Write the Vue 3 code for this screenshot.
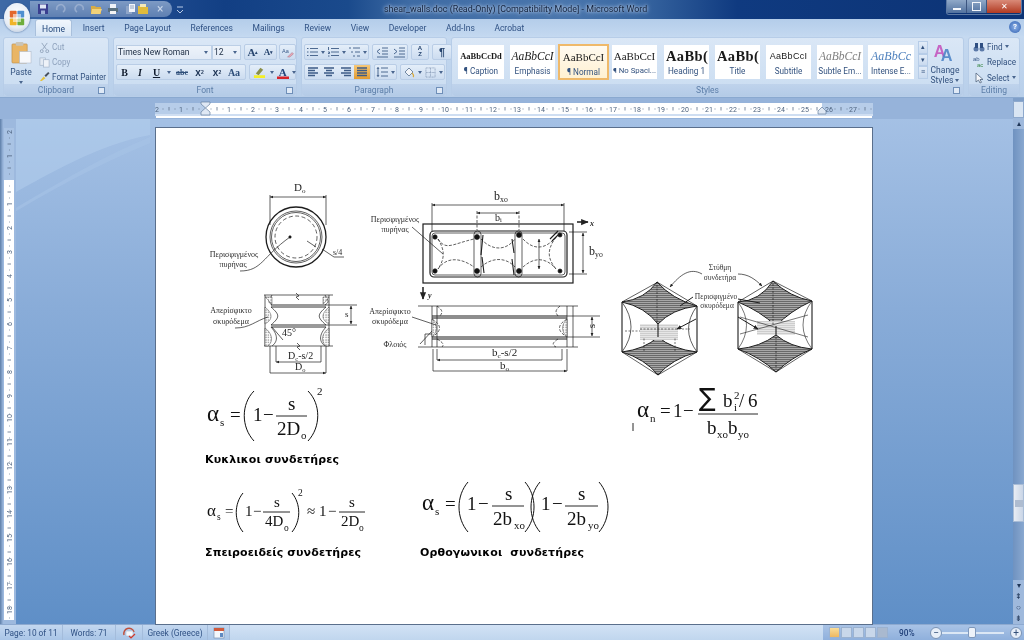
<script setup>
const tabs = ['Insert', 'Page Layout', 'References', 'Mailings', 'Review', 'View', 'Developer', 'Add-Ins', 'Acrobat']
const styles = [
  { k: 'caption', p: 'AaBbCcDd', l: '¶ Caption' },
  { k: 'emph', p: 'AaBbCcI', l: 'Emphasis' },
  { k: 'normal', p: 'AaBbCcI', l: '¶ Normal' },
  { k: 'nospace', p: 'AaBbCcI', l: '¶ No Spaci...' },
  { k: 'h1', p: 'AaBb(', l: 'Heading 1' },
  { k: 'title', p: 'AaBb(', l: 'Title' },
  { k: 'subtitle', p: 'AaBbCcI', l: 'Subtitle' },
  { k: 'subtle', p: 'AaBbCcI', l: 'Subtle Em...' },
  { k: 'intense', p: 'AaBbCc', l: 'Intense E...' }
]
const hMarks = []
for (let i = -2; i <= 27; i++) hMarks.push({ n: Math.abs(i), x: 205 + 24 * i - 155, show: i !== 0 })
const vMarks = []
for (let i = -2; i <= 18; i++) vMarks.push({ n: Math.abs(i), y: 180 + 24 * i - 128, show: i !== 0 })
</script>

<template>
  <div class="app">
    <header class="titlebar">
      <div class="qat">
        <svg class="qi" viewBox="0 0 12 12"><rect x="1" y="1" width="10" height="10" fill="#3a3f8f"/><rect x="3" y="1.5" width="6" height="4" fill="#dfe6f5"/><rect x="4" y="7.5" width="4" height="3.5" fill="#9fb0d8"/></svg>
        <svg class="qi faded" viewBox="0 0 12 12"><path d="M3 7a4 4 0 1 1 6 2" fill="none" stroke="#a6b8d6" stroke-width="1.6"/></svg>
        <span class="qc"></span>
        <svg class="qi faded tight" viewBox="0 0 12 12"><path d="M9 7a4 4 0 1 0-6 2" fill="none" stroke="#a6b8d6" stroke-width="1.6"/></svg>
        <svg class="qi" viewBox="0 0 12 12"><path d="M1 3h4l1 1h5v7H1z" fill="#d6ab45"/><path d="M2 6h10l-2 5H1z" fill="#f2d27a"/></svg>
        <svg class="qi" viewBox="0 0 12 12"><rect x="3" y="1" width="6" height="4" fill="#eef2f8"/><rect x="1" y="5" width="10" height="4" fill="#59707f"/><rect x="3" y="8" width="6" height="3" fill="#f4f4f4"/></svg>
        <svg class="qi near" viewBox="0 0 12 12"><rect x="2" y="3" width="6" height="8" fill="#8ea5c8"/><rect x="5" y="1" width="6" height="8" fill="#f1f4fa"/><path d="M6 3h4M6 5h4" stroke="#6a83a8" stroke-width=".7"/></svg>
        <svg class="qi" viewBox="0 0 12 12"><path d="M1 3h4l1 1h5v7H1z" fill="#e0bb3c"/><rect x="3" y="1" width="6" height="3" fill="#f4e9b8"/></svg>
        <span class="qx">×</span>
      </div>
      <svg class="qi qmore" viewBox="0 0 12 12"><path d="M3 3h6M3 6l3 3 3-3" fill="none" stroke="#b9cbe6" stroke-width="1"/></svg>
      <div class="doctitle">shear_walls.doc (Read-Only) [Compatibility Mode] - Microsoft Word</div>
      <div class="winbtns">
        <span class="wb"><i class="wmin"></i></span>
        <span class="wb"><i class="wmax"></i></span>
        <span class="wb wclose">✕</span>
      </div>
    </header>

    <div class="office" aria-label="Office">
      <svg viewBox="0 0 20 20" width="16" height="16">
        <rect x="1" y="1" width="8.5" height="8.5" rx="1" fill="#e2672b"/>
        <rect x="10.5" y="1" width="8.5" height="8.5" rx="1" fill="#4f8fd0"/>
        <rect x="1" y="10.5" width="8.5" height="8.5" rx="1" fill="#f0b429"/>
        <rect x="10.5" y="10.5" width="8.5" height="8.5" rx="1" fill="#6fae3c"/>
        <rect x="5" y="5" width="10" height="10" fill="#fff" opacity=".55"/>
      </svg>
    </div>

    <nav class="tabs">
      <span class="tab active">Home</span>
      <span v-for="t in tabs" :key="t" class="tab">{{ t }}</span>
      <span class="help">?</span>
    </nav>

    <section class="ribbon">
      <div class="group g-clip">
        <div class="gbody clipbody">
          <div class="paste">
            <svg viewBox="0 0 22 24" width="21" height="23"><rect x="1" y="3" width="16" height="20" rx="1" fill="#e9b565" stroke="#b98a45" stroke-width=".6"/><rect x="5" y="1" width="8" height="4" rx="1" fill="#c9c4b8"/><rect x="9" y="11" width="12" height="12" fill="#f7f8fb" stroke="#aeb9c9" stroke-width=".6"/></svg>
            <span class="ptext">Paste</span>
            <span class="caret pc"></span>
          </div>
          <div class="cliplist">
            <div class="cl dim"><svg viewBox="0 0 12 12" width="11" height="11"><path d="M3 1l5 7M9 1L4 8" stroke="#93a4bb" stroke-width="1" fill="none"/><circle cx="3" cy="10" r="1.6" fill="none" stroke="#93a4bb"/><circle cx="9" cy="10" r="1.6" fill="none" stroke="#93a4bb"/></svg>Cut</div>
            <div class="cl dim"><svg viewBox="0 0 12 12" width="11" height="11"><rect x="1" y="1" width="6" height="8" fill="#e3eaf3" stroke="#9fb0c6" stroke-width=".7"/><rect x="5" y="3" width="6" height="8" fill="#eef2f8" stroke="#9fb0c6" stroke-width=".7"/></svg>Copy</div>
            <div class="cl"><svg viewBox="0 0 12 12" width="11" height="11"><path d="M1 11l4-5 2 2-4 3z" fill="#e6c23c"/><path d="M6 5l4-4 1.5 1.5-4 4z" fill="#46505e"/></svg>Format Painter</div>
          </div>
        </div>
        <div class="glabel">Clipboard<i class="launch"></i></div>
      </div>

      <div class="group g-font">
        <div class="gbody fontbody">
          <div class="frow">
            <div class="combo cfont">Times New Roman<span class="caret"></span></div>
            <div class="combo csize">12<span class="caret"></span></div>
            <div class="bgroup grow"><span class="b w16 serifb">A<sup>▴</sup></span><span class="b w15 serifb small">A<sup>▾</sup></span></div>
            <div class="bgroup clear"><svg viewBox="0 0 14 12" width="13" height="11"><text x="1" y="6" font-size="6" fill="#3a5a88" font-family="Liberation Sans">Aa</text><path d="M7 11l5-5 1.5 1.5-4 3.5z" fill="#e7a8b8" stroke="#90586a" stroke-width=".4"/></svg></div>
          </div>
          <div class="frow r2">
            <div class="bgroup fmt">
              <span class="b w15 tb">B</span>
              <span class="b w16 ti">I</span>
              <span class="b w17 tu">U</span>
              <span class="b w8"><span class="caret"></span></span>
              <span class="b w18 tabc">abc</span>
              <span class="b w17 tx">x<sub>2</sub></span>
              <span class="b w18 tx">x<sup>2</sup></span>
              <span class="b w16 taa">Aa</span>
              <span class="b w4"></span>
            </div>
            <div class="bgroup colors">
              <span class="b w18"><svg viewBox="0 0 14 13" width="13" height="12"><path d="M3 8l5-6 3 2-5 6z" fill="#8a8f4a"/><rect x="1" y="10" width="12" height="3" fill="#f3ee28"/></svg></span>
              <span class="b w8"><span class="caret"></span></span>
              <span class="b w14"><svg viewBox="0 0 12 13" width="12" height="13"><text x="1.8" y="9.5" font-size="11" font-weight="700" fill="#23457c" font-family="Liberation Serif">A</text><rect x="0" y="10.5" width="12" height="2.5" fill="#d8232a"/></svg></span>
              <span class="b w7"><span class="caret"></span></span>
            </div>
          </div>
        </div>
        <div class="glabel">Font<i class="launch"></i></div>
      </div>

      <div class="group g-para">
        <div class="gbody parabody">
          <div class="frow">
            <div class="bgroup">
              <span class="b w14"><svg class="ln" viewBox="0 0 12 12"><path d="M4 2.5h8M4 6h8M4 9.5h8M1 2.5h1.5M1 6h1.5M1 9.5h1.5"/></svg></span><span class="b w7"><span class="caret"></span></span>
              <span class="b w14"><svg class="ln" viewBox="0 0 12 12"><path d="M4 2.5h8M4 6h8M4 9.5h8M1.5 1v3M1 6h1.5v1.500H1M1 10h1.500"/></svg></span><span class="b w7"><span class="caret"></span></span>
              <span class="b w14"><svg class="ln" viewBox="0 0 12 12"><path d="M1 2h2M5 2h7M3 6h2M7 6h5M5 10h2M9 10h3"/></svg></span><span class="b w7"><span class="caret"></span></span>
            </div>
            <div class="bgroup">
              <span class="b w17"><svg class="ln" viewBox="0 0 12 12"><path d="M6 2h6M6 5h6M6 8h6M1 11h11M4 3L1 5.500 4 8"/></svg></span>
              <span class="b w17"><svg class="ln" viewBox="0 0 12 12"><path d="M6 2h6M6 5h6M6 8h6M1 11h11M1 3l3 2.500L1 8"/></svg></span>
            </div>
            <div class="bgroup"><span class="b w16 sort">A<br>Z</span></div>
            <div class="bgroup"><span class="b w18 pil">¶</span></div>
          </div>
          <div class="frow r2">
            <div class="bgroup">
              <span class="b w16"><svg class="ln thick" viewBox="0 0 12 12"><path d="M1 2h10M1 4.500h7M1 7h10M1 9.500h7"/></svg></span>
              <span class="b w16"><svg class="ln thick" viewBox="0 0 12 12"><path d="M1 2h10M3 4.500h6M1 7h10M3 9.500h6"/></svg></span>
              <span class="b w17"><svg class="ln thick" viewBox="0 0 12 12"><path d="M1 2h10M4 4.500h7M1 7h10M4 9.500h7"/></svg></span>
              <span class="b w16 on"><svg class="ln thick" viewBox="0 0 12 12"><path d="M1 2h10M1 4.500h10M1 7h10M1 9.500h10"/></svg></span>
            </div>
            <div class="bgroup">
              <span class="b w14"><svg class="ln" viewBox="0 0 12 12"><path d="M5 2h7M5 6h7M5 10h7M2 1.500v9M1 3l1-1.500L3 3M1 9l1 1.500L3 9"/></svg></span><span class="b w7"><span class="caret"></span></span>
            </div>
            <div class="bgroup">
              <span class="b w15"><svg viewBox="0 0 12 12" width="12" height="12"><path d="M2 6l4-4 4 4-4 4z" fill="#f2f4f8" stroke="#56708f" stroke-width=".8"/><path d="M9 7c2 2 2 3 1 4" fill="none" stroke="#d9a93a" stroke-width="1.200"/></svg></span><span class="b w7"><span class="caret"></span></span>
              <span class="b w14"><svg viewBox="0 0 12 12" width="11" height="11"><path d="M1 1h10v10H1zM6 1v10M1 6h10" fill="none" stroke="#7e93af" stroke-width=".8" stroke-dasharray="1 .6"/></svg></span><span class="b w7"><span class="caret"></span></span>
            </div>
          </div>
        </div>
        <div class="glabel">Paragraph<i class="launch"></i></div>
      </div>

      <div class="group g-styles">
        <div class="gbody stylesbody">
          <div v-for="s in styles" :key="s.k" class="style" :class="'s-' + s.k">
            <div class="sprev">{{ s.p }}</div>
            <div class="slabel">{{ s.l }}</div>
          </div>
          <div class="sscroll"><span>▴</span><span>▾</span><span>≡</span></div>
          <div class="change">
            <svg viewBox="0 0 28 28" width="24" height="25"><text x="1" y="19" font-size="19" font-weight="700" fill="#c665c4" font-family="Liberation Sans">A</text><text x="9" y="24" font-size="19" font-weight="700" fill="#4f86c8" font-family="Liberation Sans" opacity=".9">A</text></svg>
            <span>Change<br>Styles <i class="caret"></i></span>
          </div>
        </div>
        <div class="glabel">Styles<i class="launch"></i></div>
      </div>

      <div class="group g-edit">
        <div class="gbody editbody">
          <div class="cl"><svg viewBox="0 0 12 12" width="12" height="12"><circle cx="3" cy="8" r="2.500" fill="#5b79a8"/><circle cx="9" cy="8" r="2.500" fill="#5b79a8"/><rect x="2" y="2" width="3" height="5" fill="#2f4f82"/><rect x="7" y="2" width="3" height="5" fill="#2f4f82"/></svg>Find <i class="caret"></i></div>
          <div class="cl"><svg viewBox="0 0 12 12" width="12" height="12"><text x="0" y="5" font-size="6" fill="#3a5a88" font-family="Liberation Sans">ab</text><text x="4" y="11" font-size="6" fill="#3d8a4a" font-family="Liberation Sans">ac</text></svg>Replace</div>
          <div class="cl"><svg viewBox="0 0 12 12" width="12" height="12"><path d="M3 1v9l2.500-2 1.500 3 1.500-.7L7 7.500h3z" fill="#f5f7fb" stroke="#51657f" stroke-width=".8"/></svg>Select <i class="caret"></i></div>
        </div>
        <div class="glabel">Editing</div>
      </div>
    </section>

    <main class="work">
      <svg class="swoosh" viewBox="0 0 160 110" preserveAspectRatio="none">
        <path d="M0 0H155V16C100 26 50 55 0 82Z" fill="#b3cdec" opacity=".55"/>
        <path d="M0 98C50 70 100 40 155 18V24C100 46 50 72 0 102Z" fill="#a7c3e6" opacity=".6"/>
      </svg>

      <aside class="leftcol">
        <div class="tabstop"><i></i></div>
        <svg class="vruler" viewBox="0 0 10 492" width="10" height="492">
          <rect x="0" y="0" width="10" height="52" fill="#a9c3e4"/>
          <rect x="0" y="52" width="10" height="440" fill="#fff"/>
          <g v-for="m in vMarks" :key="m.y">
            <text v-if="m.show" :transform="`translate(7.500 ${m.y + 2}) rotate(-90)`" class="rnum">{{ m.n }}</text>
            <path :d="`M5 ${m.y + 6}h.8M3.500 ${m.y + 12}h3.500M5 ${m.y + 18}h.8`" stroke="#5d6f88" stroke-width=".8"/>
          </g>
        </svg>
      </aside>

      <div class="center">
        <svg class="hruler" viewBox="0 0 718 20" width="718" height="20">
          <rect x="0" y="5" width="718" height="12" fill="#b7cde9"/>
          <rect x="50" y="5" width="617" height="12" fill="#fff"/>
          <rect x="0" y="16" width="718" height="2" fill="#cfdef2"/>
          <rect x="1" y="18" width="716" height="2.500" fill="#fff"/>
          <g v-for="m in hMarks" :key="m.x">
            <text v-if="m.show" :x="m.x" y="13.500" class="rnum" text-anchor="middle">{{ m.n }}</text>
            <path :d="`M${m.x + 6} 10.500v1M${m.x + 12} 9v3.500M${m.x + 18} 10.500v1`" stroke="#5d6f88" stroke-width=".8"/>
          </g>
          <path d="M46 4h9v2l-4.500 4L46 6zM50.500 10l4.500 4v3h-9v-3z" fill="#dfe8f4" stroke="#66809f" stroke-width=".7"/>
          <path d="M663 16v-3l4-4 4 4v3z" fill="#dfe8f4" stroke="#66809f" stroke-width=".7"/>
        </svg>
        <div class="page">
          <svg class="sheet" viewBox="156 129 716 495" width="716" height="495">
            <defs>
              <marker id="arr" viewBox="0 0 6 6" refX="5.500" refY="3" markerWidth="5" markerHeight="5" orient="auto-start-reverse"><path d="M0 0.500L6 3 0 5.500z" fill="#222"/></marker>
              <pattern id="hat" width="2" height="2" patternUnits="userSpaceOnUse"><rect width="2" height="2" fill="#a8a8a8"/><rect width="2" height="1" fill="#6a6a6a"/></pattern>
              <pattern id="dots" width="2.500" height="2.500" patternUnits="userSpaceOnUse"><rect width="2.500" height="2.500" fill="#fff"/><circle cx="1" cy="1" r=".7" fill="#888"/></pattern>
              <pattern id="mid" width="2" height="2" patternUnits="userSpaceOnUse"><rect width="2" height="2" fill="#e6e6e6"/><rect width="2" height=".6" fill="#bdbdbd"/></pattern>
            </defs>

            <!-- circular column -->
            <g class="draw">
              <circle cx="296" cy="238" r="30" stroke-width="1.300"/>
              <circle cx="296" cy="238" r="26"/>
              <circle cx="296" cy="238" r="24.500"/>
              <circle cx="296" cy="238" r="21" stroke-dasharray="4 2.500"/>
              <path d="M270 198L326 198" marker-start="url(#arr)" marker-end="url(#arr)"/>
              <path d="M270 196V226M326 196V226"/>
              <path d="M240 272C262 272 262 258 290 238M307 242L316 248M322 250L334 258H344"/>
              <circle cx="290" cy="238" r="1.200" fill="#111"/>
              <!-- column elevation -->
              <path d="M264 296H333M264 347H333M265 296V347M329 296V347M272 296C268 303 268 303 272 306M325 296C329 303 329 303 325 306"/>
              <path d="M271 306H326M271 308H326M271 326H326M271 328H326" stroke-width=".9"/>
              <path d="M271 308C280 316 280 318 271 326M326 308C317 316 317 318 326 326M271 328C280 338 276 344 272 347M326 328C317 338 321 344 325 347" />
              <path d="M265 298H272V305C269 303 268 300 265 298ZM265 308C272 314 274 320 265 325ZM265 329C272 334 274 342 268 347H265ZM329 308C322 314 320 320 329 325ZM329 329C322 334 320 342 326 347H329ZM329 298H323V305C326 303 327 300 329 298Z" fill="url(#dots)" stroke-width=".4"/>
              <path d="M326 306H357M326 326H357"/>
              <path d="M351 307V325" marker-start="url(#arr)" marker-end="url(#arr)"/>
              <path d="M235 329C250 329 255 322 268 318M272 328L283 341"/>
              <path d="M296 294l3 3-3 1 3 3M297 344l3 3-3 1 3 3"/>
              <path d="M270 347V374M326 347V374M276 347V363M321 347V363"/>
              <path d="M276 363H321M270 374H326" marker-start="url(#arr)" marker-end="url(#arr)"/>
            </g>
            <text x="294" y="192" class="t11">D<tspan class="sb" dy="2">o</tspan></text>
            <text x="234" y="258" class="t8" text-anchor="middle">Περισφιγμένος</text>
            <text x="233" y="268" class="t8" text-anchor="middle">πυρήνας</text>
            <text x="333" y="256" class="t8">s/4</text>
            <text x="231" y="314" class="t8" text-anchor="middle">Απερίσφικτο</text>
            <text x="231" y="325" class="t8" text-anchor="middle">σκυρόδεμα</text>
            <text x="345" y="318" class="t9">s</text>
            <text x="282" y="337" class="t10">45°</text>
            <text x="288" y="360" class="t10">D<tspan class="sb" dy="2">c</tspan><tspan dy="-2">-s/2</tspan></text>
            <text x="295" y="371" class="t10">D<tspan class="sb" dy="2">o</tspan></text>

            <!-- rectangular column plan -->
            <g class="draw">
              <path d="M432 206H564" marker-start="url(#arr)" marker-end="url(#arr)"/>
              <path d="M432 204V232M564 204V232"/>
              <path d="M477 214H519" marker-start="url(#arr)" marker-end="url(#arr)"/>
              <path d="M477 212V231M519 212V231" stroke-dasharray="3 1.500"/>
              <rect x="423" y="225" width="150" height="59" stroke-width="1.200"/>
              <rect x="430" y="232" width="137" height="46" rx="4" stroke-width="1.200"/>
              <rect x="432" y="234" width="133" height="42" rx="3"/>
              <rect x="474" y="232" width="7" height="46" rx="3.500"/>
              <rect x="515" y="232" width="7" height="46" rx="3.500"/>
              <circle cx="435" cy="238" r="2.200" fill="#111"/><circle cx="435" cy="272" r="2.200" fill="#111"/>
              <circle cx="477" cy="238" r="2.500" fill="#111"/><circle cx="477" cy="272" r="2.500" fill="#111"/>
              <circle cx="519" cy="236" r="2.500" fill="#111"/><circle cx="519" cy="272" r="2.500" fill="#111"/>
              <circle cx="560" cy="236" r="2" fill="#111"/><circle cx="560" cy="272" r="2" fill="#111"/>
              <path d="M438 240C446 252 452 245 474 240M481 240C492 252 506 252 515 240M523 240C534 252 546 250 556 238M438 270C446 258 460 258 474 268M481 268C492 258 506 258 515 268M523 268C534 258 546 258 556 270M438 240C444 250 446 258 438 270M556 238C546 252 548 260 556 270" stroke-dasharray="3 1.500"/>
              <path d="M483 236L481 256M484 274L482 258M512 240L514 254M512 260L514 276M550 240L558 232M552 242L560 234" stroke-width="1.100"/>
              <path d="M539 240V270" marker-start="url(#arr)" marker-end="url(#arr)"/>
              <path d="M412 228L443 255"/>
              <path d="M577 223H588" marker-end="url(#arr)" stroke-width="1.500"/>
              <path d="M423 288V300" marker-end="url(#arr)" stroke-width="1.500"/>
              <path d="M569 233H587M569 275H587"/>
              <path d="M583 234V274" marker-start="url(#arr)" marker-end="url(#arr)"/>
              <!-- rectangular elevation -->
              <path d="M418 307H578M418 348H578M432 307V348M437 307V348M573 307V348M567 307V348"/>
              <path d="M432 317H567M432 319H567M432 338H567M432 340H567" stroke-width="1"/>
              <path d="M432 320C442 326 442 332 432 338M567 320C557 326 557 332 567 338M437 307C444 312 442 314 440 317M560 307C554 312 556 314 558 317M437 340C444 344 444 346 442 348M558 340C552 344 552 346 556 348" stroke-dasharray="3 1.500"/>
              <path d="M432 320C438 326 438 332 432 338ZM567 320C561 326 561 332 567 338Z" fill="url(#dots)" stroke-width=".4"/>
              <path d="M567 317H600M567 338H600"/>
              <path d="M592 318V337" marker-start="url(#arr)" marker-end="url(#arr)"/>
              <path d="M412 318L436 326M420 345L432 332M432 335H425V346"/>
              <path d="M437 350V361M562 350V361M433 350V372M567 350V372"/>
              <path d="M437 361H562M433 372H567" marker-start="url(#arr)" marker-end="url(#arr)"/>
            </g>
            <text x="494" y="201" class="t12">b<tspan class="sb" dy="2">xo</tspan></text>
            <text x="495" y="222" class="t10">b<tspan class="sb" dy="1">i</tspan></text>
            <text x="395" y="223" class="t8" text-anchor="middle">Περισφιγμένος</text>
            <text x="395" y="233" class="t8" text-anchor="middle">πυρήνας</text>
            <text x="590" y="227" class="t8 it">x</text>
            <text x="428" y="299" class="t8 it">y</text>
            <text x="589" y="256" class="t12">b<tspan class="sb" dy="2">yo</tspan></text>
            <text x="390" y="315" class="t8" text-anchor="middle">Απερίσφικτο</text>
            <text x="390" y="325" class="t8" text-anchor="middle">σκυρόδεμα</text>
            <text x="395" y="348" class="t8" text-anchor="middle">Φλοιός</text>
            <text x="595" y="327" class="t11" transform="rotate(-90 595 327)" text-anchor="middle">s</text>
            <text x="492" y="357" class="t11">b<tspan class="sb" dy="2">c</tspan><tspan dy="-2">-s/2</tspan></text>
            <text x="500" y="370" class="t11">b<tspan class="sb" dy="2">o</tspan></text>

            <!-- confinement cubes -->
            <g class="draw">
              <path d="M702 275C690 268 680 276 670 288" marker-end="url(#arr)"/>
              <path d="M738 275C748 275 755 280 762 287" marker-end="url(#arr)"/>
              <!-- left cube -->
              <path d="M622 303Q645 300 657 283Q672 300 697 307Q672 310 658 325Q645 308 622 303Z" fill="url(#hat)" stroke-width="1"/>
              <path d="M622 353Q645 350 658 338Q672 350 697 353Q672 360 658 376Q645 360 622 353Z" fill="url(#hat)" stroke-width="1"/>
              <path d="M640 325H678V341H640Z" fill="url(#mid)" stroke="none"/>
              <path d="M622 303V353M697 307V353M658 325V338" stroke-width="1.100"/>
              <path d="M622 303Q640 328 622 353M697 307Q680 330 697 353M622 303L658 283M697 353L658 376M622 353L658 376M657 283L697 307" stroke-width=".7"/>
              <path d="M657 286V325M640 330H690M625 332H640M644 352V338M675 352V338" stroke-dasharray="2 1.500" stroke-width=".6"/>
              <path d="M693 298L680 307M696 320L677 330" marker-end="url(#arr)" stroke-width="1"/>
              <!-- right cube -->
              <path d="M738 303Q760 302 773 282Q790 298 812 302Q790 312 776 327Q760 312 738 303Z" fill="url(#hat)" stroke-width="1"/>
              <path d="M738 350Q760 348 776 336Q790 348 812 350Q792 358 776 373Q760 358 738 350Z" fill="url(#hat)" stroke-width="1"/>
              <path d="M757 322H795V336H757Z" fill="url(#mid)" stroke="none"/>
              <path d="M738 303V350M812 302V350M776 327V336" stroke-width="1.100"/>
              <path d="M738 303L773 282L812 302M738 350L776 373L812 350" stroke-width=".7"/>
              <path d="M738 303Q755 326 738 350M812 302Q794 326 812 350M740 318L808 338M740 335L808 316" stroke-width=".6"/>
              <path d="M773 285V327M776 338V370" stroke-dasharray="2 1.500" stroke-width=".7"/>
              <path d="M738 300L760 304M738 318L758 330" marker-end="url(#arr)" stroke-width="1"/>
            </g>
            <text x="720" y="271" class="t7" text-anchor="middle">Στύθμη</text>
            <text x="720" y="281" class="t7" text-anchor="middle">συνδετήρα</text>
            <text x="716" y="300" class="t7" text-anchor="middle">Περισφιγμένο</text>
            <text x="717" y="309" class="t7" text-anchor="middle">σκυρόδεμα</text>

            <!-- formula 1 -->
            <text x="207" y="422" class="fa">α</text><text x="220" y="427" class="fs">s</text>
            <text x="230" y="422" class="fn">=</text>
            <path class="par" d="M254 392C241 405 241 428 254 442M308 392C321 405 321 428 308 442"/>
            <text x="253" y="422" class="fn">1</text><text x="263" y="422" class="fn">−</text>
            <path class="bar" d="M276 417H307"/>
            <text x="288" y="411" class="fn">s</text>
            <text x="277" y="436" class="fn">2D</text><text x="301" y="440" class="fs">o</text>
            <text x="317" y="396" class="fs">2</text>
            <text x="205" y="464" class="cap" textLength="134" lengthAdjust="spacing">Κυκλικοι συνδετήρες</text>

            <!-- formula 2 -->
            <text x="207" y="517" class="fb">α</text><text x="217" y="521" class="fss">s</text>
            <text x="225" y="517" class="fm">=</text>
            <path class="par" d="M243 494C234 505 234 522 243 533M292 494C301 505 301 522 292 533"/>
            <text x="245" y="517" class="fm">1</text><text x="253" y="517" class="fm">−</text>
            <path class="bar" d="M263 513H290"/>
            <text x="274" y="508" class="fm">s</text>
            <text x="265" y="527" class="fm">4D</text><text x="284" y="532" class="fss">o</text>
            <text x="298" y="497" class="fss">2</text>
            <text x="307" y="517" class="fm">≈</text>
            <text x="319" y="517" class="fm">1</text><text x="328" y="517" class="fm">−</text>
            <path class="bar" d="M339 513H365"/>
            <text x="349" y="508" class="fm">s</text>
            <text x="341" y="527" class="fm">2D</text><text x="359" y="532" class="fss">o</text>
            <text x="205" y="557" class="cap" textLength="156" lengthAdjust="spacing">Σπειροειδείς συνδετήρες</text>

            <!-- formula 3 -->
            <text x="422" y="511" class="fa">α</text><text x="435" y="516" class="fs">s</text>
            <text x="445" y="511" class="fn">=</text>
            <path class="par" d="M468 483C456 497 456 519 468 533M525 483C537 497 537 519 525 533M540 483C528 497 528 519 540 533M599 483C611 497 611 519 599 533"/>
            <text x="467" y="511" class="fn">1</text><text x="478" y="511" class="fn">−</text>
            <path class="bar" d="M492 507H524"/>
            <text x="505" y="501" class="fn">s</text>
            <text x="493" y="526" class="fn">2b</text><text x="514" y="530" class="fs">xo</text>
            <text x="541" y="511" class="fn">1</text><text x="552" y="511" class="fn">−</text>
            <path class="bar" d="M565 507H598"/>
            <text x="578" y="501" class="fn">s</text>
            <text x="567" y="526" class="fn">2b</text><text x="588" y="530" class="fs">yo</text>
            <text x="420" y="557" class="cap" textLength="164" lengthAdjust="spacing">Ορθογωνικοι&#160; συνδετήρες</text>

            <!-- formula 4 -->
            <path class="bar" d="M633 424V432" />
            <text x="637" y="418" class="fa">α</text><text x="650" y="423" class="fs">n</text>
            <text x="660" y="418" class="fn">=</text>
            <text x="673" y="418" class="fn">1</text><text x="683" y="418" class="fn">−</text>
            <path class="bar" d="M698 415H758"/>
            <text x="699" y="407" class="fsum">∑</text>
            <text x="723" y="408" class="fn">b</text><text x="734" y="400" class="fs">2</text><text x="734" y="412" class="fs">i</text>
            <text x="739" y="408" class="fn">/</text><text x="748" y="408" class="fn">6</text>
            <text x="707" y="435" class="fn">b</text><text x="717" y="439" class="fs">xo</text>
            <text x="728" y="435" class="fn">b</text><text x="738" y="439" class="fs">yo</text>
          </svg>
        </div>
      </div>

      <aside class="scroll">
        <div class="sc-top"><i></i></div>
        <div class="sc-up">▴</div>
        <div class="sc-track"><div class="sc-thumb"><i></i></div></div>
        <div class="sc-dn">▾</div>
        <div class="sc-nav">⇞</div>
        <div class="sc-nav">○</div>
        <div class="sc-nav">⇟</div>
      </aside>
    </main>

    <footer class="status">
      <div class="st-left">
        <span class="st p">Page: 10 of 11</span>
        <span class="st w">Words: 71</span>
        <span class="st i"><svg viewBox="0 0 14 12" width="14" height="12"><path d="M2 8a5 5 0 0 1 10-3" fill="none" stroke="#c0503c" stroke-width="1.500"/><rect x="4" y="4" width="7" height="5" fill="#f6f8fb" stroke="#9bb0cc" stroke-width=".5"/><path d="M7 9l2 2 4-4" stroke="#d33a2a" fill="none" stroke-width="1.200"/></svg></span>
        <span class="st g">Greek (Greece)</span>
        <span class="st m"><svg viewBox="0 0 12 12" width="12" height="12"><rect x="1" y="1" width="10" height="10" fill="#f4f7fb" stroke="#7d93b3" stroke-width=".7"/><rect x="1" y="1" width="10" height="3" fill="#cf5a3c"/><rect x="7" y="6" width="3" height="4" fill="#5f8ac2"/></svg></span>
      </div>
      <div class="st-mid"></div>
      <div class="st-right">
        <div class="views">
          <span class="v on"></span><span class="v"></span><span class="v"></span><span class="v"></span><span class="v d"></span>
        </div>
        <span class="zoomv">90%</span>
        <span class="zbtn">−</span>
        <div class="slider"><i></i></div>
        <span class="zbtn">+</span>
      </div>
    </footer>
  </div>
</template>

<style scoped>
.app { position: relative; width: 1024px; height: 640px; overflow: hidden; display: flex; flex-direction: column; font-family: Roboto, "Noto Sans", sans-serif; font-size: 8.500px; color: #33527f; background: #bcd2ec; filter: blur(.3px); }

.titlebar { height: 19px; flex: none; display: flex; align-items: flex-start; background: linear-gradient(90deg, #3f6aa6 0, #234f93 12%, #123f84 22%, #1a4a8c 34%, #3e6ba4 40%, #4a76ad 55%, #3a68a2 62%, #0f3a80 72%, #0c3375 100%); position: relative; }
.qat { margin-left: 30px; margin-top: 1px; width: 142px; height: 16px; border-radius: 0 8px 8px 0; background: linear-gradient(#7d9ac4, #5f80b2); display: flex; align-items: center; padding-left: 7px; box-sizing: border-box; }
.qi { width: 12px; height: 12px; flex: none; margin-right: 5px; }
.qi.tight { margin-right: 4px; }
.qi.near { margin-right: 1px; }
.faded { opacity: .7; }
.qc { width: 3px; flex: none; }
.qx { color: #c8d6ea; font-size: 12px; line-height: 12px; margin-left: 3px; }
.qmore { margin: 4px 0 0 2px; }
.doctitle { position: absolute; left: 384px; top: 3px; width: 260px; white-space: nowrap; font-size: 8.900px; line-height: 13px; color: #14233e; text-shadow: 0 0 3px #c3d5ec, 0 0 5px #c3d5ec; }
.winbtns { position: absolute; right: 2px; top: 0; height: 14px; display: flex; border: 1px solid #5e7aa4; border-top: 0; border-radius: 0 0 3px 3px; overflow: hidden; }
.wb { width: 19px; height: 13px; display: flex; align-items: center; justify-content: center; background: linear-gradient(#8fa8c8, #52729f); border-right: 1px solid #3b5580; }
.wclose { width: 34px; background: linear-gradient(#d98a78, #b13a22); color: #fff; font-size: 8px; border: 0; }
.wmin { width: 8px; height: 2px; background: #f3f6fb; margin-top: 4px; }
.wmax { width: 7px; height: 7px; border: 1px solid #f3f6fb; }

.office { position: absolute; left: 4px; top: 3px; width: 26px; height: 29px; border-radius: 50%; background: radial-gradient(circle at 50% 40%, #fff 0, #e8eef6 60%, #aebfd6 100%); display: flex; align-items: center; justify-content: center; z-index: 3; box-shadow: 0 0 2px #2b4f86; }

.tabs { height: 17px; flex: none; display: flex; align-items: stretch; padding-left: 35px; background: linear-gradient(#b4cdea, #c3d8f0); position: relative; }
.tab { padding: 0 9.800px; line-height: 18px; font-size: 8.500px; color: #2f5184; white-space: nowrap; }
.tab:nth-child(2) { margin-left: 1px; }
.tab.active { padding: 0 6px; width: 37px; box-sizing: border-box; text-align: center; background: linear-gradient(#f0f6fd, #d9e7f6); border: 1px solid #a9c0dc; border-bottom: 0; border-radius: 3px 3px 0 0; color: #1f4478; }
.help { position: absolute; right: 3px; top: 2px; width: 12px; height: 12px; border-radius: 50%; background: radial-gradient(#8fb2e8, #2e5fb0); color: #fff; font-size: 8px; font-weight: 700; line-height: 12px; text-align: center; }

.ribbon { height: 62px; flex: none; display: flex; gap: 4px; padding: 1px 0 0 3px; box-sizing: border-box; background: linear-gradient(#c5d9f0, #b8cfea); border-bottom: 1px solid #8aa9d0; }
.group { display: flex; flex-direction: column; border-radius: 3px; background: linear-gradient(#dae7f6, #c9dcf1); border: 1px solid #b7cde8; box-sizing: border-box; height: 60px; }
.g-clip { width: 106px; } .g-font { width: 184px; } .g-para { width: 146px; } .g-styles { width: 513px; } .g-edit { width: 52px; }
.gbody { flex: 1; min-height: 0; }
.glabel { height: 12px; flex: none; position: relative; background: linear-gradient(#bfd3ec, #b4cbe7); color: #5c7ea8; text-align: center; font-size: 8.500px; line-height: 13px; border-radius: 0 0 3px 3px; }
.launch { position: absolute; right: 3px; top: 3px; width: 5px; height: 5px; border: 1px solid #6f8fb8; background: #dfe9f6; }

.clipbody { display: flex; }
.paste { width: 34px; flex: none; display: flex; flex-direction: column; align-items: center; padding-top: 3px; }
.ptext { margin-top: 3px; line-height: 11px; }
.pc { margin-top: 3px; }
.caret { display: inline-block; width: 0; height: 0; border-left: 2.500px solid transparent; border-right: 2.500px solid transparent; border-top: 3px solid #4a668f; vertical-align: middle; }
.cliplist { display: flex; flex-direction: column; padding-top: 2px; margin-left: 1px; flex: none; }
.cl { height: 15.500px; display: flex; align-items: center; gap: 2px; white-space: nowrap; color: #33527f; font-size: 8.200px; }
.cl.dim { color: #8ea2bd; }

.frow { display: flex; align-items: center; gap: 2px; height: 16px; }
.frow.r2 { margin-top: 4px; }
.fontbody { padding: 6px 0 0 2px; }
.combo { height: 15px; background: linear-gradient(#edf3fa, #e1eaf6); border: 1px solid #bccfe6; box-sizing: border-box; display: flex; align-items: center; justify-content: space-between; padding: 0 3px 0 1px; font-size: 8.500px; color: #1d2d44; white-space: nowrap; }
.cfont { width: 96px; } .csize { width: 29px; margin-left: -2px; margin-right: 1px; }
.bgroup { display: flex; align-items: center; height: 16px; border: 1px solid #b9cde6; border-radius: 2px; background: linear-gradient(#e4eef9, #ccdcf0); box-sizing: border-box; }
.b { display: flex; align-items: center; justify-content: center; height: 14px; flex: none; color: #27456f; }
.w4 { width: 4px; } .w7 { width: 7px; } .w8 { width: 8px; } .w14 { width: 14px; } .w15 { width: 15px; } .w16 { width: 16px; } .w17 { width: 17px; } .w18 { width: 18px; }
.serifb { font: 700 11px "Liberation Serif", serif; }
.serifb.small { font-size: 9px; }
.serifb sup { font-size: 5px; }
.clear { width: 17px; justify-content: center; }
.tb { font: 700 10px "Liberation Serif", serif; color: #111c2e; }
.ti { font: italic 700 10px "Liberation Serif", serif; color: #111c2e; }
.tu { font: 700 10px "Liberation Serif", serif; text-decoration: underline; color: #111c2e; }
.tabc { font: 700 8px "Liberation Serif", serif; text-decoration: line-through; color: #2f4f7a; }
.tx { font: 700 10px "Liberation Sans", sans-serif; color: #1d3354; }
.tx sub, .tx sup { font-size: 5px; }
.taa { font: 700 10px "Liberation Serif", serif; color: #2f4f7a; }
.fmt { width: 130px; } .colors { width: 47px; margin-left: 1px; }

.parabody { padding: 6px 0 0 2px; }
.parabody .frow { gap: 3px; }
.ln { width: 12px; height: 12px; fill: none; stroke: #3d5b86; stroke-width: .9; }
.ln.thick { stroke-width: 1.300; }
.on { background: linear-gradient(#f6c776, #e29b32); }
.sort { font: 700 6px/6px "Liberation Sans", sans-serif; display: block; text-align: center; }
.pil { font: 700 11px "Liberation Sans", sans-serif; }

.stylesbody { display: flex; align-items: flex-start; padding: 7px 0 0 6px; }
.style { width: 45px; height: 34px; margin-right: 6px; flex: none; background: #fff; box-sizing: border-box; overflow: hidden; text-align: center; }
.sprev { height: 20px; line-height: 22px; font-family: "Liberation Serif", serif; font-size: 11px; color: #1a1a1a; white-space: nowrap; overflow: hidden; }
.slabel { line-height: 12px; font-size: 8.200px; color: #33527f; white-space: nowrap; }
.s-caption { width: 46px; }
.s-caption .sprev { font-weight: 700; font-size: 8.500px; }
.s-emph { margin-right: 3px; }
.s-emph .sprev { font-style: italic; font-size: 11.500px; }
.s-normal { width: 51px; margin: -1px 3px 0 0; height: 36px; border: 2px solid #efb96a; background: linear-gradient(#fffaf0, #fff1d2); }
.s-nospace { margin-right: 7px; }
.s-nospace .slabel { font-size: 7.800px; }
.s-h1 .sprev, .s-title .sprev { font-weight: 700; font-size: 14.500px; letter-spacing: .4px; text-align: left; padding-left: 2px; }
.s-subtitle .sprev { letter-spacing: .3px; font-family: "Liberation Sans", sans-serif; font-size: 9px; }
.s-subtle { width: 46px; margin-right: 5px; }
.s-subtle .sprev { font-style: italic; color: #7f7f7f; font-size: 11.500px; }
.s-intense { width: 46px; margin-right: 4px; }
.s-intense .sprev { font-style: italic; color: #4f81bd; font-size: 12px; }
.sscroll { width: 10px; margin-top: -4px; flex: none; display: flex; flex-direction: column; }
.sscroll span { height: 12.700px; background: linear-gradient(#e2ecf8, #c9daef); border: 1px solid #b7cde8; box-sizing: border-box; font-size: 7px; line-height: 11px; text-align: center; }
.change { width: 34px; display: flex; flex-direction: column; align-items: center; margin-top: -5px; line-height: 10px; text-align: center; flex: none; }

.editbody { padding: 1px 0 0 4px; }

.work { flex: 1; min-height: 0; display: flex; position: relative; background: linear-gradient(#a5c1e5 3%, #89acd8 40%, #5f8fc7 100%); }
.swoosh { position: absolute; left: 0; top: 21px; width: 155px; height: 110px; pointer-events: none; }
.leftcol { width: 16px; flex: none; position: relative; padding-left: 3px; box-sizing: border-box; background: linear-gradient(90deg, #5d7ea8 0, #9db9de 20%); }
.tabstop { width: 13px; height: 13px; margin-top: 5px; box-sizing: border-box; border: 1px solid #6c8fbd; background: #dbe7f6; position: relative; }
.tabstop i { position: absolute; left: 4px; top: 3px; width: 4px; height: 4px; border-left: 1.500px solid #1c3a68; border-bottom: 1.500px solid #1c3a68; }
.vruler { display: block; margin: 12px 0 0 1px; }
.center { flex: 1; min-width: 0; padding-left: 139px; display: flex; flex-direction: column; position: relative; }
.center::before { content: ""; position: absolute; left: -16px; top: 0; right: 0; height: 21px; background: #96b3da; }
.hruler { display: block; position: relative; flex: none; }
.page { width: 716px; margin: 10px 0 0 1px; flex: 1; min-height: 0; background: #fff; box-shadow: 0 0 0 1px #5a6f8c; position: relative; overflow: hidden; }
.sheet { display: block; }
.draw { fill: none; stroke: #1d1d1d; stroke-width: .7; }
.rnum { font: 7px Roboto, sans-serif; fill: #4e637f; }
.t7 { font: 7.500px "Liberation Serif", serif; fill: #333; }
.t8 { font: 8px "Liberation Serif", serif; fill: #2a2a2a; }
.t9 { font: 9px "Liberation Serif", serif; fill: #222; }
.t10 { font: 10px "Liberation Serif", serif; fill: #222; }
.t11 { font: 11px "Liberation Serif", serif; fill: #222; }
.t12 { font: 12px "Liberation Serif", serif; fill: #222; }
.it { font-style: italic; font-weight: 700; }
.sb { font-size: 65%; }
.fa { font: 23px "Liberation Serif", serif; fill: #111; }
.fb { font: 17px "Liberation Serif", serif; fill: #111; }
.fn { font: 19px "Liberation Serif", serif; fill: #111; }
.fm { font: 15px "Liberation Serif", serif; fill: #111; }
.fs { font: 11px "Liberation Serif", serif; fill: #111; }
.fss { font: 9.500px "Liberation Serif", serif; fill: #111; }
.fsum { font: 25px "DejaVu Sans", serif; fill: #111; }
.cap { font: 700 11px "DejaVu Sans", sans-serif; fill: #000; }
.par { fill: none; stroke: #111; stroke-width: 1; }
.bar { fill: none; stroke: #111; stroke-width: .9; }

.scroll { width: 11px; flex: none; position: absolute; right: 0; top: 0; bottom: 0; display: flex; flex-direction: column; align-items: stretch; background: #7f9fc9; }
.sc-top { height: 17px; margin-top: 3px; background: #d9e5f3; border: 1px solid #8ea9cd; box-sizing: border-box; }
.sc-up, .sc-dn, .sc-nav { height: 11px; line-height: 11px; text-align: center; font-size: 8px; color: #1f3658; background: #9fb9dc; }
.sc-track { flex: 1; min-height: 0; padding-top: 355px; background: linear-gradient(90deg, #6f92c0, #89a8d0); box-sizing: border-box; }
.sc-thumb { height: 38px; background: linear-gradient(90deg, #e8edf4, #c9d5e6); border: 1px solid #a8bcd6; box-sizing: border-box; display: flex; align-items: center; justify-content: center; }
.sc-thumb i { width: 8px; height: 7px; background: #aebcd0; }

.status { height: 16px; flex: none; display: flex; background: linear-gradient(#c3d7ef, #a9c5e7); border-top: 1px solid #8eaad0; box-sizing: border-box; font-size: 8.300px; color: #2f5184; }
.st-left { display: flex; height: 100%; }
.st { display: flex; align-items: center; justify-content: center; border-right: 1px solid #a4bcdb; white-space: nowrap; }
.p { width: 62px; } .w { width: 52px; } .i { width: 26px; } .g { width: 64px; } .m { width: 21px; }
.st-mid { flex: 1; background: linear-gradient(#d2e2f5, #c0d6ee); }
.st-right { width: 201px; flex: none; display: flex; align-items: center; background: linear-gradient(#a9c3e6, #8fb0dc); padding-left: 6px; box-sizing: border-box; }
.views { display: flex; width: 60px; }
.v { width: 11px; height: 11px; margin-right: 1px; background: #c8d7ea; border: 1px solid #9bb2d0; box-sizing: border-box; }
.v.on { background: linear-gradient(#f9dd9a, #efb860); }
.v.d { background: #a9b9cf; }
.zoomv { margin-left: 10px; width: 22px; color: #1f3f78; font-weight: 500; }
.zbtn { width: 12px; height: 12px; border-radius: 50%; border: 1px solid #7a93b5; background: #e6eef8; box-sizing: border-box; margin-left: 9px; text-align: center; line-height: 9px; font-size: 10px; color: #324f78; }
.slider { width: 62px; height: 2px; margin: 0 -6px 0 0; position: relative; background: #dbe7f5; }
.slider i { position: absolute; left: 26px; top: -5px; width: 8px; height: 11px; background: #edf2f9; border: 1px solid #7f98bb; box-sizing: border-box; border-radius: 2px; }
.st-right .zbtn:last-child { margin-left: 12px; }
</style>
